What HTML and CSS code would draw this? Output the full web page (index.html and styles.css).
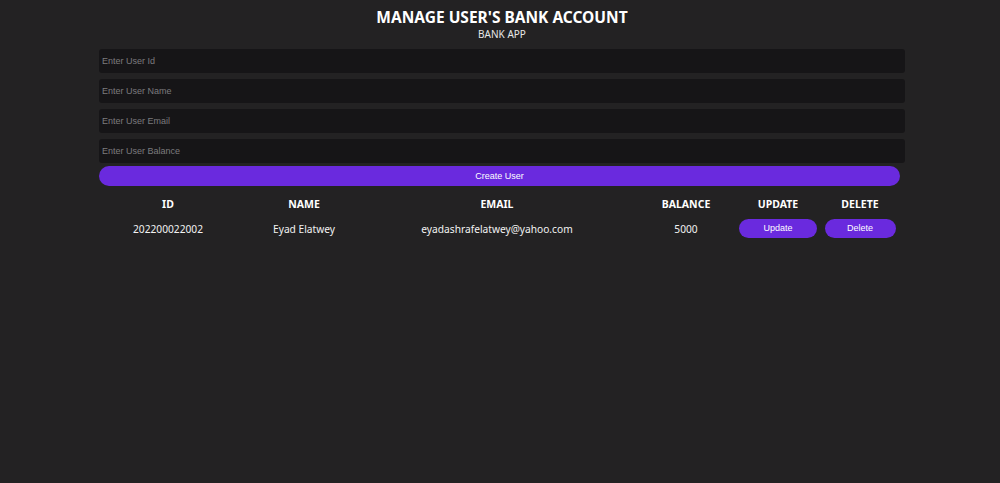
FILE: index.html
```html
<!DOCTYPE html>
<html lang="en">
<head>
    <meta charset="utf-8">
    <meta name="viewport" content="width=device-width, initial-scale=1.0">
    <title>Bank App</title>
    <link rel="stylesheet" href="styles.css">
</head>
<body>
    <div id="box">
        <h1>MANAGE USER'S BANK ACCOUNT</h1>
        <p class="sub">BANK APP</p>
        <div id="form">
            <input type="text" class="textbox" placeholder="Enter User Id">
            <input type="text" class="textbox" placeholder="Enter User Name">
            <input type="text" class="textbox" placeholder="Enter User Email">
            <input type="text" class="textbox" placeholder="Enter User Balance">
            <button id="create">Create User</button>
        </div>
        <div id="users">
            <div class="head">ID</div>
            <div class="head">NAME</div>
            <div class="head">EMAIL</div>
            <div class="head">BALANCE</div>
            <div class="head">UPDATE</div>
            <div class="head">DELETE</div>

            <div class="cell txt">202200022002</div>
            <div class="cell txt">Eyad Elatwey</div>
            <div class="cell txt">eyadashrafelatwey@yahoo.com</div>
            <div class="cell txt">5000</div>
            <div class="cell"><button class="btn upd">Update</button></div>
            <div class="cell"><button class="btn del">Delete</button></div>
        </div>
    </div>
</body>
</html>
```

FILE: styles.css
```css
* {
    margin: 0;
    padding: 0;
    box-sizing: border-box;
}
html {
    background-color: #232223;
}
body {
    font-family: "Noto Sans", "Open Sans", sans-serif;
    color: #ffffff;
    min-height: 483px;
}
#box {
    width: 806px;
    padding-top: 7px;
    margin-left: 99px;
}
h1 {
    font-size: 15.5px;
    font-weight: bold;
    text-align: center;
    line-height: 20px;
}
.sub {
    font-size: 10px;
    text-align: center;
    line-height: 14px;
    color: #e8e8e8;
}
#form {
    margin-top: 8px;
    display: flex;
    flex-direction: column;
    gap: 6px;
}
.textbox {
    width: 806px;
    height: 24px;
    background-color: #161517;
    border: none;
    border-radius: 3px;
    padding: 0 3px;
    font: 9px "Liberation Sans", Arial, sans-serif;
    color: #ddd;
    outline: none;
}
.textbox::placeholder {
    color: #7c7b7e;
}
#create {
    width: 801px;
    height: 20px;
    margin-top: -3px;
    border: none;
    border-radius: 10px;
    background-color: #6a2ade;
    color: #ffffff;
    font: 9px "Liberation Sans", Arial, sans-serif;
}
#users {
    display: grid;
    grid-template-columns: 138px 134px 252px 126px 58px 106px;
    justify-items: center;
    align-items: center;
    margin-top: 11px;
}
.head {
    font-weight: bold;
    font-size: 10.5px;
    height: 14px;
    line-height: 14px;
}
.cell {
    font-size: 10.2px;
    height: 32px;
    line-height: 32px;
    color: #f2f2f2;
}
.txt {
    padding-top: 2px;
}
.btn {
    height: 19px;
    border: none;
    border-radius: 10px;
    background-color: #6a2ade;
    color: #ffffff;
    font: 9px "Liberation Sans", Arial, sans-serif;
    vertical-align: middle;
}
.upd {
    width: 78px;
}
.del {
    width: 71px;
}
```
